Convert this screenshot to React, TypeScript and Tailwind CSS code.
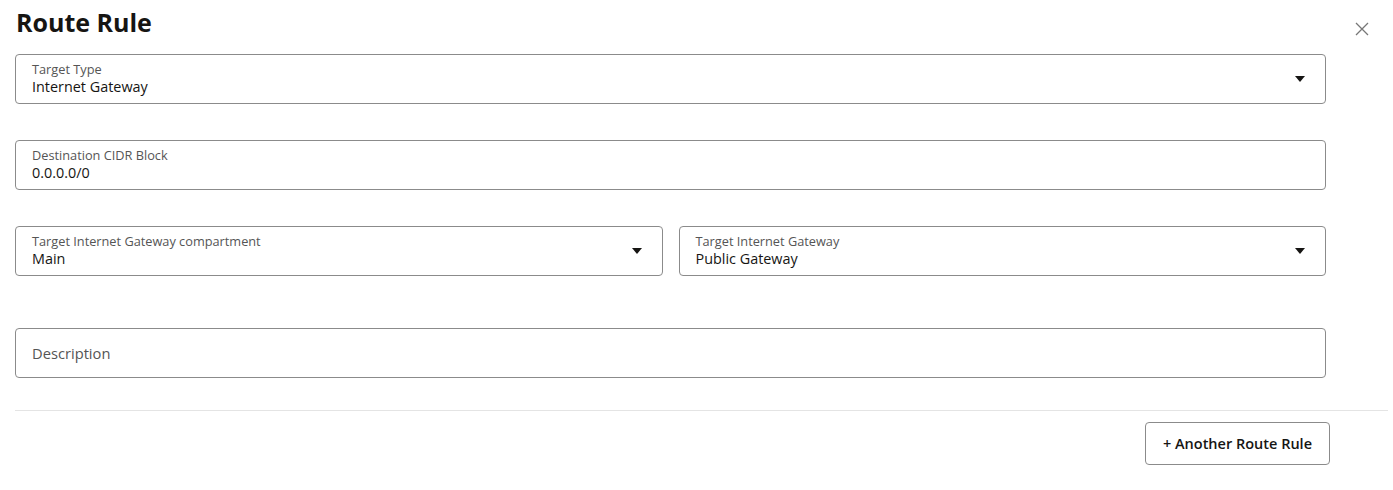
const font = { fontFamily: '"Open Sans", "Noto Sans", sans-serif' };

function Caret() {
  return (
    <svg width="10" height="6" viewBox="0 0 10 6" className="shrink-0">
      <path d="M0 0h10L5 6z" fill="#161513" />
    </svg>
  );
}

function Field({ label, value, select }: { label: string; value: string; select?: boolean }) {
  return (
    <div className="flex h-[50px] items-center rounded-[4px] border border-[#8b8b8b] bg-white pl-4 pr-5">
      <div className="flex min-w-0 flex-1 flex-col">
        <span className="text-[12.75px] leading-[15px] text-[#555]">{label}</span>
        <span className="text-[14.4px] leading-[20px] text-[#161513]">{value}</span>
      </div>
      {select && <Caret />}
    </div>
  );
}

export default function App() {
  return (
    <div className="relative h-[490px] w-full bg-white pl-[15px]" style={font}>
      <button aria-label="Close" className="absolute right-[24px] top-[22px] text-[#777]">
        <svg width="14" height="14" viewBox="0 0 14 14">
          <path d="M1 1l12 12M13 1L1 13" stroke="currentColor" strokeWidth="1.3" />
        </svg>
      </button>
      <h1 className="pl-[1px] pt-[4px] text-[25px] font-bold leading-[36px] text-[#161513]">Route Rule</h1>
      <div className="mt-[14px] flex w-[1311px] flex-col">
        <Field label="Target Type" value="Internet Gateway" select />
        <div className="mt-[36px]">
          <Field label="Destination CIDR Block" value="0.0.0.0/0" />
        </div>
        <div className="mt-[36px] grid grid-cols-2 gap-4">
          <Field label="Target Internet Gateway compartment" value="Main" select />
          <Field label="Target Internet Gateway" value="Public Gateway" select />
        </div>
        <div className="mt-[52px] flex h-[50px] items-center rounded-[4px] border border-[#8b8b8b] pl-4">
          <span className="text-[14.7px] text-[#555]">Description</span>
        </div>
      </div>
      <div className="mr-[5px] mt-[32px] border-t border-[#e4e4e4]" />
      <div className="flex w-[1315px] justify-end pt-[11px]">
        <button className="h-[43px] rounded-[4px] border border-[#8b8b8b] bg-white px-[17px] text-[14.5px] font-semibold text-[#161513]">
          + Another Route Rule
        </button>
      </div>
    </div>
  );
}
